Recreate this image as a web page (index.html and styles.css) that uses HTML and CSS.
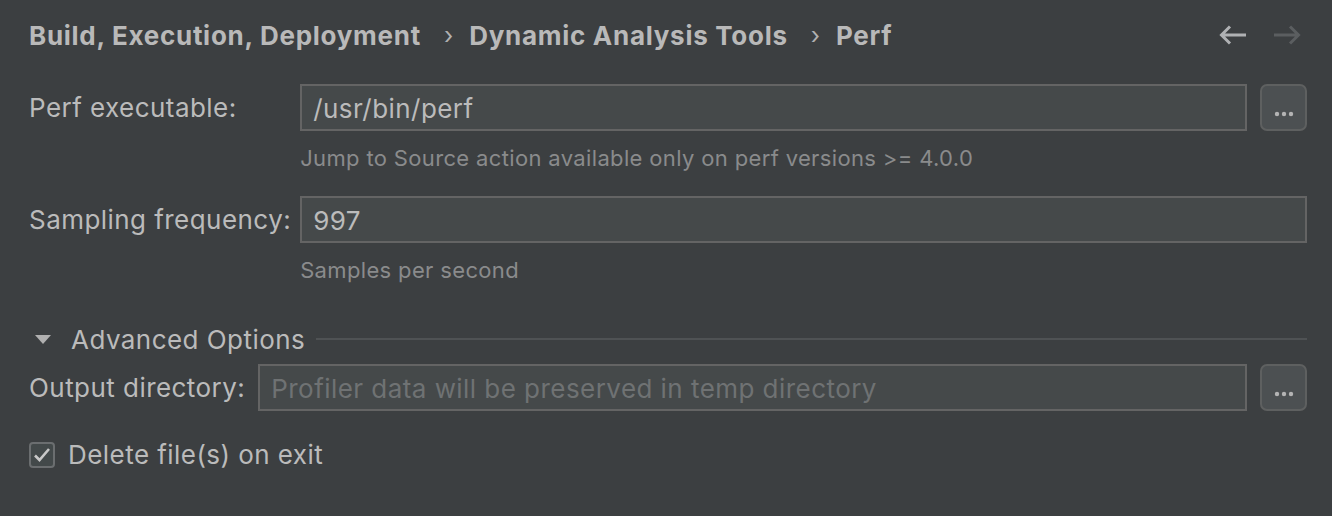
FILE: index.html
```html
<!DOCTYPE html>
<html>
<head>
<meta charset="utf-8">
<link rel="stylesheet" href="styles.css">
</head>
<body>
<div class="page">
  <header class="header">
    <nav class="crumbs">
      <span class="crumb">Build, Execution, Deployment</span>
      <span class="sep">›</span>
      <span class="crumb">Dynamic Analysis Tools</span>
      <span class="sep">›</span>
      <span class="crumb">Perf</span>
    </nav>
    <div class="navs">
      <svg class="nav-arrow" width="28" height="22" viewBox="0 0 28 22"><path d="M27 11H3M11 2.5L2.5 11L11 19.5" fill="none" stroke="#afb1b3" stroke-width="3"/></svg>
      <svg class="nav-arrow" width="28" height="22" viewBox="0 0 28 22"><path d="M1 11H25M17 2.5L25.5 11L17 19.5" fill="none" stroke="#5b5e60" stroke-width="3"/></svg>
    </div>
  </header>

  <div class="grid">
    <label class="label">Perf executable:</label>
    <div class="field-row">
      <div class="input">/usr/bin/perf</div>
      <button class="browse"><svg width="20" height="6" viewBox="0 0 20 6"><circle cx="3" cy="3" r="2.2" fill="#b4b4b4"/><circle cx="10" cy="3" r="2.2" fill="#b4b4b4"/><circle cx="17" cy="3" r="2.2" fill="#b4b4b4"/></svg></button>
    </div>
    <div></div>
    <div class="hint">Jump to Source action available only on perf versions &gt;= 4.0.0</div>

    <label class="label">Sampling frequency:</label>
    <div class="field-row">
      <div class="input">997</div>
    </div>
    <div></div>
    <div class="hint">Samples per second</div>
  </div>

  <div class="section">
    <span class="tri"></span>
    <span class="section-title">Advanced Options</span>
    <span class="section-line"></span>
  </div>

  <div class="out-row">
    <label class="label">Output directory:</label>
    <div class="input placeholder">Profiler data will be preserved in temp directory</div>
    <button class="browse"><svg width="20" height="6" viewBox="0 0 20 6"><circle cx="3" cy="3" r="2.2" fill="#b4b4b4"/><circle cx="10" cy="3" r="2.2" fill="#b4b4b4"/><circle cx="17" cy="3" r="2.2" fill="#b4b4b4"/></svg></button>
  </div>

  <div class="check-row">
    <span class="checkbox"><svg width="18" height="16" viewBox="0 0 18 16"><path d="M2 8.5L6.5 13L16 2" fill="none" stroke="#c8c8c8" stroke-width="2.6"/></svg></span>
    <span class="check-label">Delete file(s) on exit</span>
  </div>
</div>
</body>
</html>
```

FILE: styles.css
```css
html, body {
  margin: 0;
  padding: 0;
  background: #3c3f41;
}
body {
  width: 1332px;
  height: 516px;
  overflow: hidden;
  font-family: Inter, "Noto Sans", sans-serif;
  color: #bbbbbb;
  letter-spacing: 0.45px;
}
.page {
  padding: 0 25px 0 29px;
}
.header {
  height: 70px;
  display: flex;
  align-items: center;
  justify-content: space-between;
}
.crumbs {
  display: flex;
  align-items: center;
  font-size: 26px;
  font-weight: 700;
  color: #b9b9b9;
  letter-spacing: 0.72px;
}
.sep {
  font-weight: 400;
  font-size: 24px;
  margin: 0 16px 0 23px;
  color: #b0b0b0;
  letter-spacing: 0;
}
.navs {
  display: flex;
  gap: 26px;
  margin-right: 6px;
}
.nav-arrow { display: block; }

.grid {
  display: grid;
  grid-template-columns: auto 1fr;
  column-gap: 9px;
  margin-top: 14px;
}
.label {
  font-size: 26px;
  display: flex;
  align-items: center;
  height: 47px;
  white-space: nowrap;
}
.field-row {
  display: flex;
  gap: 13px;
}
.input {
  flex: 1;
  height: 47px;
  box-sizing: border-box;
  background: #45494a;
  border: 2px solid #646464;
  font-size: 26px;
  color: #bbbbbb;
  display: flex;
  align-items: center;
  padding-left: 11px;
  padding-top: 2px;
  white-space: nowrap;
  overflow: hidden;
}
.placeholder { color: #6f7273; }
.browse {
  width: 47px;
  height: 47px;
  flex: none;
  box-sizing: border-box;
  background: #4c5052;
  border: 2px solid #5e6060;
  border-radius: 7px;
  padding: 0;
  display: flex;
  align-items: flex-end;
  justify-content: center;
  padding-bottom: 12px;
}
.hint {
  font-size: 22px;
  color: #8a8b8c;
  height: 24px;
  line-height: 24px;
  margin-top: 15px;
  margin-bottom: 26px;
  letter-spacing: 0.35px;
}
.grid .hint:last-child { margin-bottom: 0; }

.section {
  display: flex;
  align-items: center;
  height: 30px;
  margin-top: 42px;
}
.tri {
  width: 0;
  height: 0;
  border-left: 8px solid transparent;
  border-right: 8px solid transparent;
  border-top: 9px solid #b0b0b0;
  margin-left: 6px;
  margin-right: 20px;
}
.section-title {
  font-size: 26px;
  color: #bbbbbb;
}
.section-line {
  flex: 1;
  height: 2px;
  background: #4f5254;
  margin-left: 11px;
}
.out-row {
  display: flex;
  align-items: center;
  gap: 13px;
  margin-top: 10px;
}
.check-row {
  display: flex;
  align-items: center;
  margin-top: 28px;
}
.checkbox {
  width: 26px;
  height: 26px;
  box-sizing: border-box;
  border: 2px solid #6b6e70;
  border-radius: 4px;
  background: #43494a;
  display: flex;
  align-items: center;
  justify-content: center;
}
.check-label {
  font-size: 26px;
  margin-left: 13px;
}
```
